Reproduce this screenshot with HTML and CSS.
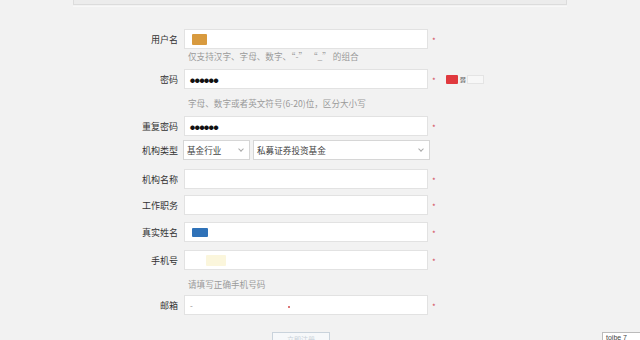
FILE: index.html
```html
<!DOCTYPE html>
<html>
<head lang="zh">
    <meta charset="UTF-8">
    <title>注册</title>
    <link rel="stylesheet" href="styles.css">
</head>
<body>
<div class="topbar"></div>
<div class="topline"></div>
<div id="form">
    <div class="row r1">
        <label>用户名</label>
        <div class="field"><span class="blob orange"></span></div>
        <span class="star">*</span>
    </div>
    <div class="hint h1">仅支持汉字、字母、数字、“-” “_” 的组合</div>

    <div class="row r2">
        <label>密码</label>
        <div class="field"><span class="dots">●●●●●●</span></div>
        <span class="star">*</span>
        <div class="strength">
            <span class="weak"></span>
            <span class="word">弱</span>
            <span class="empty"></span>
        </div>
    </div>
    <div class="hint h2">字母、数字或者英文符号(6-20)位，区分大小写</div>

    <div class="row r3">
        <label>重复密码</label>
        <div class="field"><span class="dots">●●●●●●</span></div>
        <span class="star">*</span>
    </div>

    <div class="row r4">
        <label>机构类型</label>
        <div class="select s1">基金行业<i class="chev"></i></div>
        <div class="select s2">私募证券投资基金<i class="chev"></i></div>
    </div>

    <div class="row r5">
        <label>机构名称</label>
        <div class="field"></div>
        <span class="star">*</span>
    </div>

    <div class="row r6">
        <label>工作职务</label>
        <div class="field"></div>
        <span class="star">*</span>
    </div>

    <div class="row r7">
        <label>真实姓名</label>
        <div class="field"><span class="blob blue"></span></div>
        <span class="star">*</span>
    </div>

    <div class="row r8">
        <label>手机号</label>
        <div class="field"><span class="blob yellow"></span></div>
        <span class="star">*</span>
    </div>
    <div class="hint h3">请填写正确手机号码</div>

    <div class="row r9">
        <label>邮箱</label>
        <div class="field"><span class="mark">-</span><span class="reddot"></span></div>
        <span class="star">*</span>
    </div>

    <div class="btnrow">
        <span class="btn">立即注册</span>
    </div>
</div>
<div class="tip">toibe 7</div>
</body>
</html>
```

FILE: styles.css
```css
html, body {
    margin: 0;
    padding: 0;
    background: #f2f2f2;
    font-family: "Noto Sans CJK SC", "Noto Sans", sans-serif;
    color: #333;
    overflow: hidden;
    height: 340px;
}

.topbar {
    margin-left: 73px;
    width: 492px;
    height: 4px;
    border: 1px solid #dcdcdc;
    border-top: none;
    background: #ececec;
}

.topline {
    margin: 1px 0 0 73px;
    width: 494px;
    height: 1px;
    background: #f8f8f8;
}

#form {
    padding-top: 22px;
}

.row {
    display: flex;
    align-items: center;
    height: 20px;
}

.row label {
    width: 184px;
    padding-right: 6px;
    box-sizing: border-box;
    text-align: right;
    font-size: 9px;
    color: #333;
}

.field {
    width: 244px;
    height: 20px;
    box-sizing: border-box;
    background: #fff;
    border: 1px solid #e2e2e2;
    display: flex;
    align-items: center;
    padding-left: 5px;
}

.star {
    margin-left: 4px;
    font-size: 8px;
    color: #d24a5a;
    line-height: 1;
    padding-top: 3px;
}

.hint {
    height: 14px;
    line-height: 14px;
    font-size: 8.6px;
    color: #9a9a9a;
    padding-left: 188px;
}

.r2 { margin-top: 6px; }
.h2 { margin-top: 7px; }
.r3 { margin-top: 6px; }
.r4 { margin-top: 4px; }
.r5 { margin-top: 9px; }
.r6 { margin-top: 6px; }
.r7 { margin-top: 7px; }
.r8 { margin-top: 8px; }
.h3 { margin-top: 7px; }
.r9 { margin-top: 4px; }

.dots {
    font-size: 5px;
    letter-spacing: -0.3px;
    color: #111;
}

.blob {
    display: inline-block;
    height: 11px;
    border-radius: 1px;
}

.orange {
    width: 15px;
    margin-left: 2px;
    background: #d89a3e;
}

.blue {
    width: 16px;
    height: 9px;
    margin-left: 2px;
    background: #2f72b8;
}

.yellow {
    width: 20px;
    margin-left: 16px;
    background: #fbf6dc;
}

.mark {
    font-size: 8px;
    color: #888;
}

.reddot {
    width: 2px;
    height: 2px;
    background: #d77;
    margin-left: 95px;
    margin-top: 4px;
}

.strength {
    display: flex;
    align-items: center;
    margin-left: 10px;
}

.weak {
    width: 12px;
    height: 9px;
    background: #e0393e;
    border-radius: 1px;
}

.word {
    font-size: 6px;
    color: #555;
    margin-left: 2px;
}

.empty {
    width: 17px;
    height: 9px;
    margin-left: 1px;
    background: #f7f7f7;
    border: 1px solid #e4e4e4;
    box-sizing: border-box;
}

.select {
    height: 20px;
    box-sizing: border-box;
    background: #fff;
    border: 1px solid #d6d6d6;
    display: flex;
    align-items: center;
    padding-left: 3px;
    font-size: 8.6px;
    color: #444;
    position: relative;
}

.s1 {
    width: 67px;
    margin-left: -1px;
}

.s2 {
    width: 177px;
    margin-left: 3px;
}

.chev {
    position: absolute;
    right: 6px;
    top: 6px;
    width: 3px;
    height: 3px;
    border-right: 1px solid #aaa;
    border-bottom: 1px solid #aaa;
    transform: rotate(45deg);
}

.btnrow {
    display: flex;
    margin-top: 17px;
    padding-left: 272px;
}

.btn {
    display: block;
    width: 58px;
    height: 14px;
    box-sizing: border-box;
    border: 1px solid #c9d3dc;
    background: #f6f8fa;
    font-size: 7px;
    color: #c8d0d8;
    text-align: center;
    line-height: 12px;
}

.tip {
    position: absolute;
    left: 602px;
    top: 332px;
    width: 40px;
    height: 12px;
    box-sizing: border-box;
    border: 1px solid #bbb;
    background: #fff;
    font-family: "Liberation Sans", sans-serif;
    font-size: 7px;
    color: #444;
    padding-left: 3px;
    line-height: 9px;
}
```
